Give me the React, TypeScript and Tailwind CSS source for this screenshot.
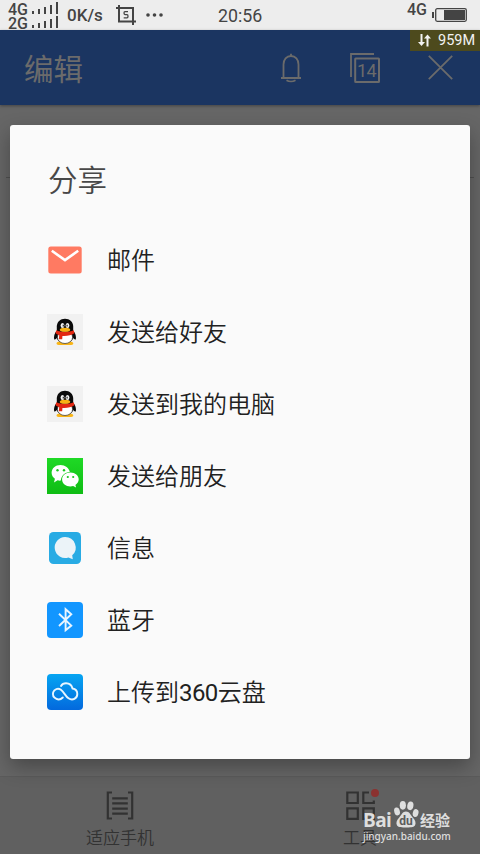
import type { ReactNode } from "react"

function SignalBars() {
  return (
    <svg width="27" height="12" viewBox="0 0 27 12" fill="#444">
      <rect x="0" y="9" width="2" height="3" />
      <rect x="6" y="7" width="2" height="5" />
      <rect x="12" y="5" width="2" height="7" />
      <rect x="18" y="3" width="2" height="9" />
      <rect x="24" y="0" width="2" height="12" />
    </svg>
  )
}

function MailIcon() {
  return (
    <svg width="36" height="36" viewBox="0 0 36 36">
      <rect x="1.3" y="4.6" width="33.4" height="26.8" rx="2.5" fill="#ff7a62" />
      <path d="M4.8 8.8 18 18.1 31.2 8.8" fill="none" stroke="#fff" strokeWidth="2.6" />
    </svg>
  )
}

function PenguinIcon() {
  return (
    <svg width="36" height="36" viewBox="0 0 36 36">
      <rect width="36" height="36" fill="#f1f1f1" />
      <path d="M9.6 17C7.500 19 6.600 22.500 7.200 25.500c1.400.2 2-.6 2.800-1.700.6 3.300 3.600 5.700 8 5.700s7.400-2.400 8-5.700c.8 1.100 1.400 1.900 2.800 1.700.6-3-.3-6.500-2.400-8.500z" fill="#080808" />
      <path d="M9.500 29.500c0-1.500 2-2 4-2h8.500c2 0 4.300.5 4.300 2 0 1.200-1.500 1.600-4 1.600H13.500c-2.500 0-4-.4-4-1.600z" fill="#f9b516" />
      <ellipse cx="18" cy="23.200" rx="7.600" ry="6.300" fill="#fff" stroke="#111" strokeWidth=".6" />
      <path d="M9.800 17.500V12.500C9.800 8 13.300 4.700 18 4.700s8.200 3.300 8.200 7.800v5z" fill="#0a0a0a" />
      <path d="M9.200 16.300c5 2.200 12.600 2.200 17.600 0l.6 3c-3 2.200-7.600 3-12 2.700l-.2 3.200h-3.300l.3-4c-1.500-.5-2.800-1.100-3.700-2.100z" fill="#e22812" />
      <ellipse cx="15.500" cy="11.500" rx="1.900" ry="2.500" fill="#f4f4f4" />
      <ellipse cx="20.500" cy="11.500" rx="1.900" ry="2.500" fill="#f4f4f4" />
      <rect x="15.700" y="10.700" width="1.200" height="1.800" fill="#222" />
      <rect x="19.500" y="10.700" width="1.200" height="1.800" fill="#222" />
      <ellipse cx="18" cy="15.800" rx="5.200" ry="2" fill="#f9b212" />
    </svg>
  )
}

function WechatIcon() {
  return (
    <svg width="36" height="36" viewBox="0 0 36 36">
      <defs>
        <linearGradient id="wechat" x1="0" y1="0" x2="0" y2="1">
          <stop offset="0" stopColor="#1fd926" />
          <stop offset="1" stopColor="#0fbc14" />
        </linearGradient>
      </defs>
      <rect width="36" height="36" fill="url(#wechat)" />
      <path d="M13.500 7C8.500 7 4.600 10.400 4.600 14.700c0 2.500 1.300 4.500 3.300 6L7 24.500l3.600-2.200c1 .3 2 .4 3.200.3.300-4.700 4.200-8.400 9-8.600C22 10 18.200 7 13.500 7z" fill="#fff" />
      <path d="M23.400 14.600c-4.700 0-8.300 3-8.300 6.900s3.600 7 8.300 7c1 0 1.900-.1 2.700-.4l3 1.500-.7-2.700c2-1.200 3.300-3.200 3.300-5.400 0-3.900-3.600-6.900-8.300-6.900z" fill="#fff" />
      <circle cx="10.500" cy="12.200" r="1.200" fill="#19c91e" />
      <circle cx="17" cy="12.200" r="1.200" fill="#19c91e" />
      <circle cx="20.800" cy="19" r="1.100" fill="#16c41b" />
      <circle cx="26.200" cy="19" r="1.100" fill="#16c41b" />
    </svg>
  )
}

function MessageIcon() {
  return (
    <svg width="36" height="36" viewBox="0 0 36 36">
      <rect x="2" y="2" width="32" height="32" rx="4.500" fill="#28abe4" />
      <path d="M18 7a10.500 10.500 0 1 0 3.400 20.500L25.800 29.300 25.200 25.300A10.500 10.500 0 0 0 18 7z" fill="#ebf3f8" />
    </svg>
  )
}

function BluetoothIcon() {
  return (
    <svg width="36" height="36" viewBox="0 0 36 36">
      <rect width="36" height="36" rx="4" fill="#1296ff" />
      <path d="M12 11.800 24.300 23.600 18.600 28.300V7.200L24.300 12.200 12 24" fill="none" stroke="#e9f5ff" strokeWidth="1.900" />
    </svg>
  )
}

function CloudIcon() {
  return (
    <svg width="36" height="36" viewBox="0 0 36 36">
      <defs>
        <linearGradient id="cloud" x1="0" y1="0" x2="0" y2="1">
          <stop offset="0" stopColor="#06a5f2" />
          <stop offset="1" stopColor="#0369dd" />
        </linearGradient>
      </defs>
      <rect width="36" height="36" rx="4" fill="url(#cloud)" />
      <path
        d="M15.800 23.500C13.800 25.500 11.500 26 9.500 24.900 6.900 23.700 5.400 21 6.200 18.300c1-3.200 4.800-4.500 7.700-2.500C17 18 18.500 22.300 21.500 24.300c4 2.700 8.800.3 8.800-4.300 0-3-2-5-4.800-5.500C24.800 11 22 9.200 19 9.200c-2.200 0-4 1-5 2.800"
        fill="none"
        stroke="#e8f6ff"
        strokeWidth="1.900"
        strokeLinecap="round"
      />
    </svg>
  )
}

const shareItems: { label: ReactNode; icon: ReactNode }[] = [
  { label: "邮件", icon: <MailIcon /> },
  { label: "发送给好友", icon: <PenguinIcon /> },
  { label: "发送到我的电脑", icon: <PenguinIcon /> },
  { label: "发送给朋友", icon: <WechatIcon /> },
  { label: "信息", icon: <MessageIcon /> },
  { label: "蓝牙", icon: <BluetoothIcon /> },
  { label: <>上传到<span className="font-normal tracking-[-0.6px]">360</span>云盘</>, icon: <CloudIcon /> },
]

function StatusBar() {
  return (
    <div className="flex h-[30px] items-center bg-[#ededed] pl-2 text-[#444]">
      <div className="flex w-[59px] flex-col font-['Roboto'] text-[16px] font-medium leading-[14px]">
        <div className="flex h-[14px] items-center gap-[3px]">
          <span className="w-[21px] pt-[3px]">4G</span>
          <SignalBars />
        </div>
        <div className="flex h-[14px] items-center gap-[3px]">
          <span className="w-[21px] pt-[3px]">2G</span>
          <SignalBars />
        </div>
      </div>
      <span className="w-[49px] pt-px font-['Roboto'] text-[17px] font-medium">0K/s</span>
      <svg className="shrink-0" width="20" height="20" viewBox="0 0 20 20" fill="none" stroke="#444" strokeWidth="2">
        <path d="M0 3h17v17M3 0v16.500h17" />
        <path d="M12 6.700H9q-1 0-1 1.400t1 1.500h2q1 0 1 1.600t-1 1.600H7.700" strokeWidth="1.300" />
      </svg>
      <svg className="ml-[10px] shrink-0" width="18" height="4" viewBox="0 0 18 4" fill="#444">
        <circle cx="2" cy="2" r="1.800" />
        <circle cx="8.500" cy="2" r="1.800" />
        <circle cx="15" cy="2" r="1.800" />
      </svg>
      <span className="ml-[54px] pt-[2px] font-['Roboto'] text-[17.800px]">20:56</span>
      <span className="ml-auto mr-[5px] pb-[10px] font-['Roboto'] text-[16px] font-medium leading-none">4G</span>
      <svg className="mr-[13px] shrink-0" width="35" height="14" viewBox="0 0 35 14">
        <rect x="0" y="4" width="2" height="6" fill="#444" />
        <rect x="3.700" y=".7" width="30.600" height="12.600" rx="1.500" fill="none" stroke="#444" strokeWidth="1.300" />
        <rect x="12" y="2" width="21" height="10" fill="#444" />
      </svg>
    </div>
  )
}

function Header() {
  return (
    <div className="relative flex h-[75px] items-center bg-[#1b3561] pl-6 text-[#6b6b6b] shadow-[0_1px_3px_rgba(0,0,0,0.35)]">
      <h1 className="pt-[5px] text-[29.500px]">编辑</h1>
      <svg className="ml-auto" width="22" height="30" viewBox="0 0 22 30" fill="none" stroke="currentColor" strokeWidth="1.800">
        <path d="M1 25h20M3.500 25V11.500C3.500 6.500 6.500 3 11 3s7.500 3.500 7.500 8.500V25M11 3V.8" />
        <path d="M6.500 27.200c2.500 1.600 6.500 1.600 9 0" />
      </svg>
      <div className="relative ml-[48px] h-[30px] w-[30px]">
        <svg width="30" height="30" viewBox="0 0 30 30" fill="none" stroke="currentColor">
          <path d="M1 24V1h23" strokeWidth="1.800" />
          <rect x="5.200" y="5.500" width="23.800" height="23.500" rx=".5" strokeWidth="2" />
        </svg>
        <span className="absolute left-[7px] top-[7px] font-['Roboto'] text-[18px] leading-[22px] tracking-[-0.5px]">14</span>
      </div>
      <svg className="ml-[48px] mr-[27px]" width="25" height="25" viewBox="0 0 25 25" stroke="currentColor" strokeWidth="1.800">
        <path d="M.8.8l23.400 23.400M24.200.8.8 24.200" />
      </svg>
      {/* Free memory badge */}
      <div className="absolute right-0 top-0 flex h-[21px] w-[70px] items-center bg-[#4d4a1d] pl-2 text-[#f2f2f2]">
        <svg width="13" height="13" viewBox="0 0 13 13" fill="currentColor">
          <path d="M2.500 0h2v8H7l-3.500 4L0 8h2.500zM8.500 12.500h2v-8H13l-3.500-4-3.500 4h2.500z" />
        </svg>
        <span className="ml-[7px] pt-[2px] font-['Roboto'] text-[14.500px] leading-none">959M</span>
      </div>
    </div>
  )
}

function BottomBar() {
  return (
    <div className="flex h-[78px] border-t border-[#5b5b5b] bg-[#606060] text-[#323232]">
      <div className="flex w-1/2 flex-col items-center pt-[14px]">
        <svg width="28" height="29" viewBox="0 0 28 29" fill="none" stroke="currentColor" strokeWidth="2.200">
          <path d="M6 1.500H1.800v26H6M22 1.500h4.200v26H22M6.200 7.300h15.600M6.200 12.300h15.600M6.200 17.600h15.600M6.200 22.700h15.600" />
        </svg>
        <span className="mt-[7px] text-[17px] font-[350] leading-[22px]">适应手机</span>
      </div>
      <div className="relative flex w-1/2 flex-col items-center pt-[14px]">
        <svg width="29" height="29" viewBox="0 0 29 29" fill="none" stroke="currentColor" strokeWidth="2.200">
          <path d="M1.300 1.500h10.500V12H1.300zM1.300 17.300h10.500v10.500H1.300zM17.300 17.300h10.500v10.500H17.300zM23 1.500h-5.700V12h10.500V9.500" />
        </svg>
        <span className="absolute left-[131px] top-[12px] h-2 w-2 rounded-full bg-[#8b3230]" />
        <span className="mt-[7px] text-[17px] font-[350] leading-[22px]">工具</span>
      </div>
    </div>
  )
}

function Watermark() {
  return (
    <div className="absolute left-[363px] top-[800px] h-[46px] w-[92px] text-[#dedede]">
      <div className="flex h-[29px] items-end">
        <span className="w-[30px] font-['Open_Sans'] text-[19px] font-bold leading-[18px] tracking-[-0.6px]">Bai</span>
        <svg className="shrink-0" width="26" height="29" viewBox="0 0 27 29" fill="currentColor">
          <ellipse cx="4.200" cy="11.300" rx="2.900" ry="4.200" transform="rotate(-15 4.200 11.300)" />
          <ellipse cx="10.200" cy="5" rx="3.200" ry="4.500" />
          <ellipse cx="18" cy="5.500" rx="3.200" ry="4.500" transform="rotate(10 18 5.500)" />
          <ellipse cx="23.500" cy="13" rx="2.900" ry="4.200" transform="rotate(15 23.500 13)" />
          <path d="M13.500 11.500c3.500 0 4.300 3 7 6 2.800 3 3.500 5.500 2.500 8-1 2.600-4 2.500-9.500 2.500S5 28.100 4 25.500c-1-2.500-.300-5 2.500-8 2.700-3 3.500-6 7-6z" />
          <text x="6.500" y="25.500" fontSize="12.500" fontWeight="700" fill="#5b5b5b">du</text>
        </svg>
        <span className="ml-px whitespace-nowrap text-[15px] font-bold leading-[16px]">经验</span>
      </div>
      <div className="font-['Noto_Sans'] text-[10px] font-medium leading-[14px] tracking-[-0.02px]">jingyan.baidu.com</div>
    </div>
  )
}

function ShareDialog() {
  return (
    <div className="absolute left-[10px] top-[125px] h-[634px] w-[460px] rounded-[3px] bg-[#fafafa] shadow-[0_8px_20px_rgba(0,0,0,0.3)]">
      <h2 className="pl-[38px] pt-[35px] text-[29.500px] font-[350] leading-[42px] text-[#484848]">分享</h2>
      <ul className="mt-[22px]">
        {shareItems.map((item, i) => (
          <li key={i} className="flex h-[72px] items-center gap-6 pl-[37px]">
            {item.icon}
            <span className="pt-px text-[24px] font-[350] leading-[34px] text-[#212121]">{item.label}</span>
          </li>
        ))}
      </ul>
    </div>
  )
}

export default function App() {
  return (
    <div className="relative flex h-[854px] w-[480px] flex-col overflow-hidden bg-[#666] font-[Roboto,'Noto_Sans_CJK_SC',sans-serif]">
      <StatusBar />
      <Header />
      <div className="flex-1 px-[6px] pt-[72px]">
        <div className="h-px bg-[#505050]" />
      </div>
      <BottomBar />
      <ShareDialog />
      <Watermark />
    </div>
  )
}
